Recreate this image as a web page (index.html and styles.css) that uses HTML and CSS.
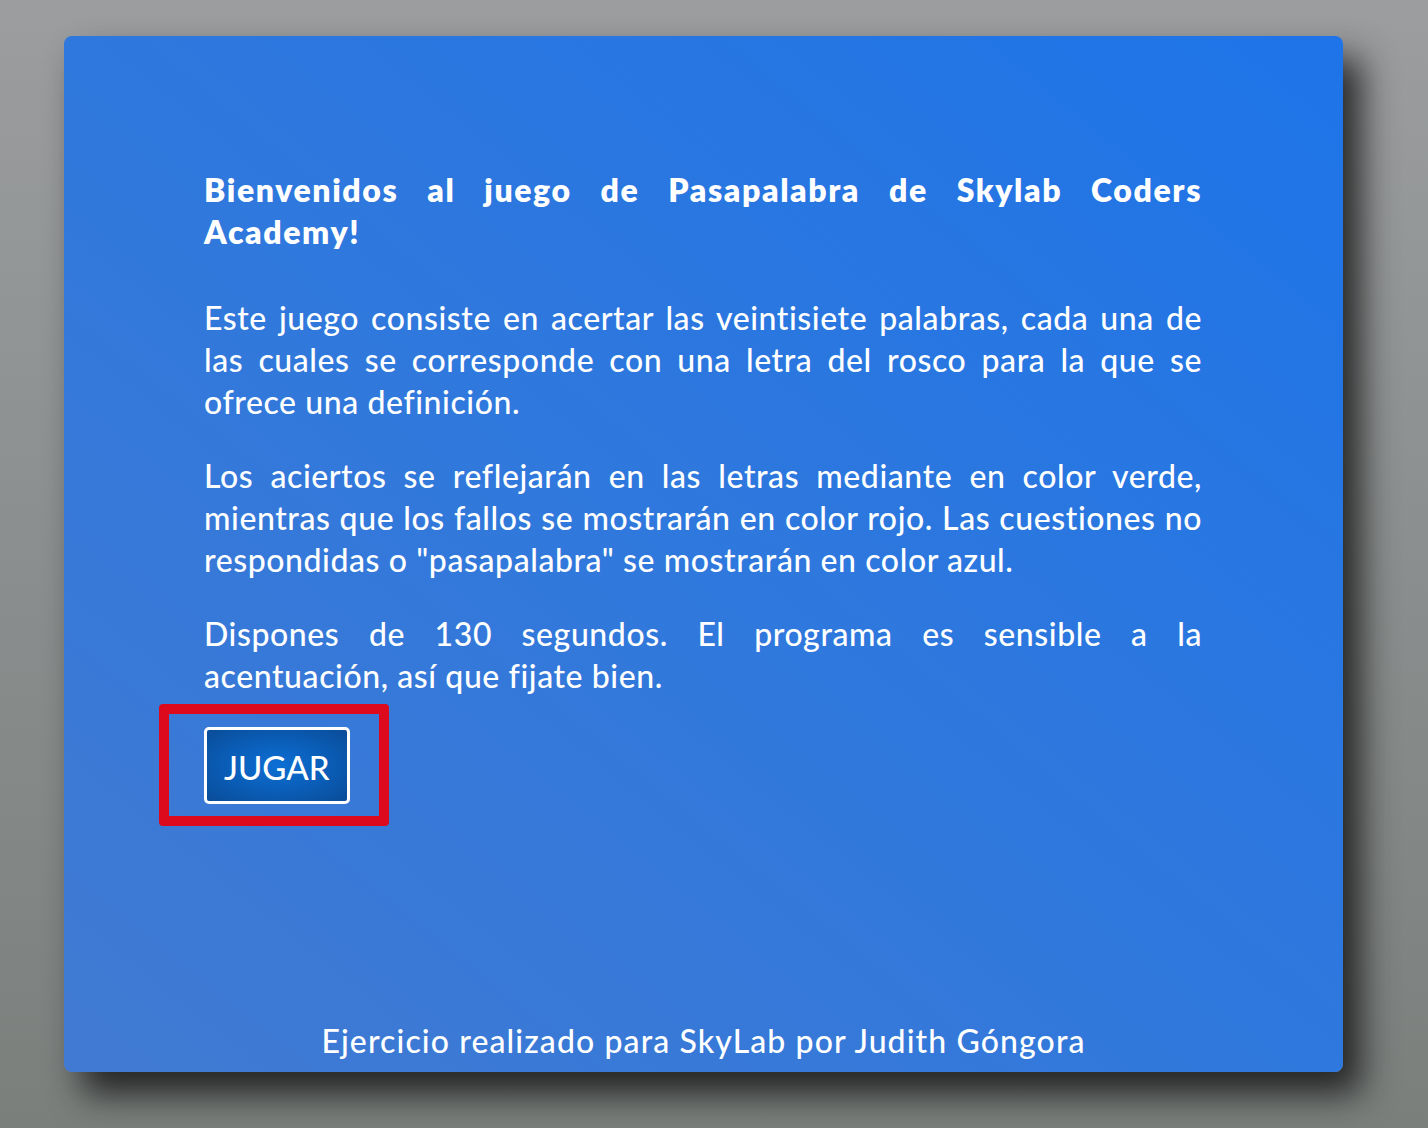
FILE: index.html
```html
<!DOCTYPE html>
<html lang="es">
<head>
<meta charset="utf-8">
<title>Pasapalabra</title>
<link rel="stylesheet" href="styles.css">
</head>
<body>
<main class="card">
  <section class="intro">
    <h1 class="title">Bienvenidos al juego de Pasapalabra de Skylab Coders Academy!</h1>
    <p class="text">Este juego consiste en acertar las veintisiete palabras, cada una de las cuales se corresponde con una letra del rosco para la que se ofrece una definición.</p>
    <p class="text">Los aciertos se reflejarán en las letras mediante en color verde, mientras que los fallos se mostrarán en color rojo. Las cuestiones no respondidas o "pasapalabra" se mostrarán en color azul.</p>
    <p class="text">Dispones de 130 segundos. El programa es sensible a la acentuación, así que fijate bien.</p>
    <div class="action">
      <button class="play" type="button">JUGAR</button>
      <span class="highlight"></span>
    </div>
  </section>
  <footer class="credits">Ejercicio realizado para SkyLab por Judith Góngora</footer>
</main>
</body>
</html>
```

FILE: styles.css
```css
html, body {
  margin: 0;
  height: 100%;
}

body {
  background: linear-gradient(to bottom, #9b9d9f 0%, #8b8e8e 50%, #7a7f7c 100%);
  font-family: Lato, "Liberation Sans", sans-serif;
  color: #ffffff;
  padding: 36px 85px 56px 64px;
  box-sizing: border-box;
  display: flex;
}

.card {
  flex: 1;
  display: flex;
  flex-direction: column;
  justify-content: space-between;
  border-radius: 8px;
  background: linear-gradient(to top right, #417ad2 0%, #2f78dd 50%, #1e74e8 100%);
  box-shadow: 18px 22px 34px rgba(20, 20, 20, 0.85);
  padding: 133px 141px 10px 140px;
}

.intro {
  display: flex;
  flex-direction: column;
}

.title {
  margin: 0 0 44px;
  font-size: 32px;
  line-height: 42px;
  font-weight: 800;
  text-align: justify;
  letter-spacing: 1.6px;
}

.text {
  margin: 0 0 32px;
  font-size: 32px;
  line-height: 42px;
  font-weight: 500;
  text-align: justify;
  letter-spacing: 0.58px;
}

.action {
  position: relative;
  margin-top: -2px;
  align-self: flex-start;
}

.play {
  display: block;
  font-family: Lato, "Liberation Sans", sans-serif;
  font-size: 33px;
  font-weight: 500;
  line-height: 40px;
  color: #ffffff;
  padding: 17px 17px 14px;
  border: 3px solid #ffffff;
  border-radius: 5px;
  background: radial-gradient(ellipse at center, #0d6fd4 0%, #0a5cb5 55%, #0a4c98 100%);
  cursor: pointer;
}

.highlight {
  position: absolute;
  left: -45px;
  top: -23px;
  right: -39px;
  bottom: -22px;
  border: 10px solid #dd0a1e;
  border-radius: 4px;
  pointer-events: none;
}

.credits {
  text-align: center;
  font-size: 32px;
  line-height: 42px;
  font-weight: 500;
  letter-spacing: 1.1px;
  margin-left: -140px;
  margin-right: -141px;
}
```
